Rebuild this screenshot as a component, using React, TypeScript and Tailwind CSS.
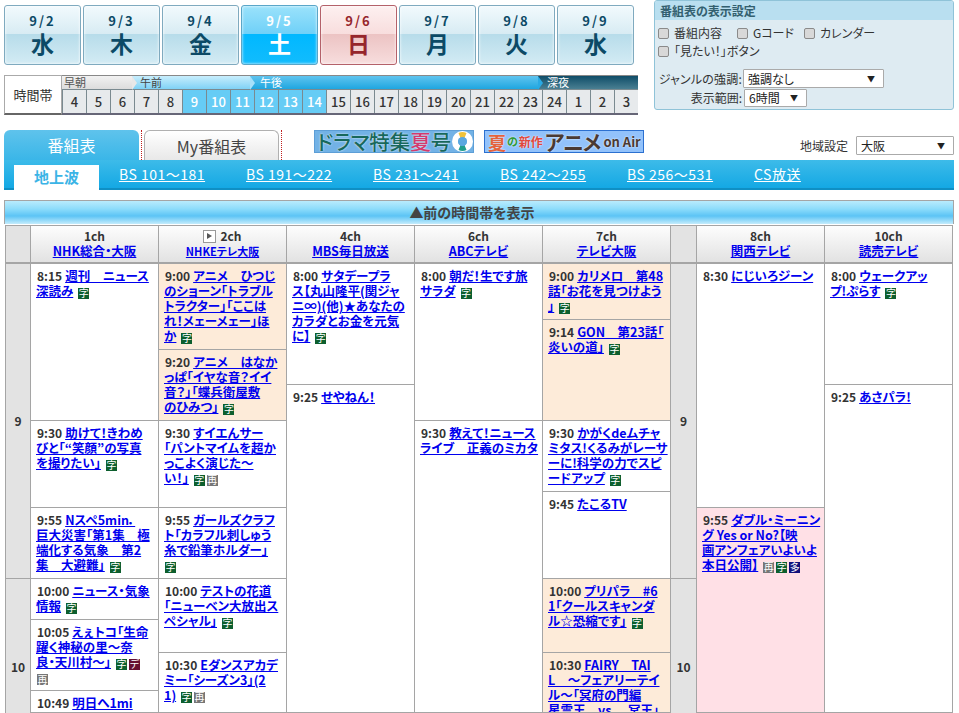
import React from 'react';

type Prog = { h?: number; t: string; lines: string[]; bg?: string };

const days = [
  { d: '9/2', w: '水' },
  { d: '9/3', w: '木' },
  { d: '9/4', w: '金' },
  { d: '9/5', w: '土', kind: 'on' },
  { d: '9/6', w: '日', kind: 'sun' },
  { d: '9/7', w: '月' },
  { d: '9/8', w: '火' },
  { d: '9/9', w: '水' },
];

const hours = [4, 5, 6, 7, 8, 9, 10, 11, 12, 13, 14, 15, 16, 17, 18, 19, 20, 21, 22, 23, 24, 1, 2, 3];

const navLinks = ['BS 101～181', 'BS 191～222', 'BS 231～241', 'BS 242～255', 'BS 256～531', 'CS放送'];

const OR = 'bg-[#fdebd9]';
const PK = 'bg-[#ffe0e6]';

const col1: Prog[] = [
  { h: 157, t: '8:15', lines: ['週刊　ニュース', '深読み {字}'] },
  { h: 87, t: '9:30', lines: ['助けて！きわめ', 'びと「“笑顔”の写真', 'を撮りたい」 {字}'] },
  { h: 71, t: '9:55', lines: ['Nスペ5min．', '巨大災害「第1集　極', '端化する気象　第2', '集　大避難」 {字}'] },
  { h: 41, t: '10:00', lines: ['ニュース・気象', '情報 {字}'] },
  { h: 71, t: '10:05', lines: ['えぇトコ「生命', '躍く神秘の里～奈', '良・天川村～」 {字}{デ}', '{再}'] },
  { t: '10:49', lines: ['明日へ1mi', 'n「つなげよう」'] },
];
const col2: Prog[] = [
  { h: 86, bg: OR, t: '9:00', lines: ['アニメ　ひつじ', 'のショーン「トラブル', 'トラクター」「ここは', 'れ！メェーメェー」ほ', 'か {字}'] },
  { h: 71, bg: OR, t: '9:20', lines: ['アニメ　はなか', 'っぱ「イヤな音？イイ', '音？」「蝶兵衛屋敷', 'のひみつ」 {字}'] },
  { h: 87, t: '9:30', lines: ['すイエんサー', '「パントマイムを超か', 'っこよく演じた～', 'い！」 {字}{再}'] },
  { h: 71, t: '9:55', lines: ['ガールズクラフ', 'ト「カラフル刺しゅう', '糸で鉛筆ホルダー」', '{字}'] },
  { h: 74, t: '10:00', lines: ['テストの花道', '「ニューベン大放出ス', 'ペシャル」 {字}'] },
  { t: '10:30', lines: ['Eダンスアカデ', 'ミー「シーズン3」(2', '1) {字}{再}'] },
];
const col4: Prog[] = [
  { h: 121, t: '8:00', lines: ['サタデープラ', 'ス【丸山隆平(関ジャ', 'ニ∞)(他)★あなたの', 'カラダとお金を元気', 'に】 {字}'] },
  { t: '9:25', lines: ['せやねん！'] },
];
const col6: Prog[] = [
  { h: 157, t: '8:00', lines: ['朝だ！生です旅', 'サラダ {字}'] },
  { t: '9:30', lines: ['教えて！ニュース', 'ライブ　正義のミカタ'] },
];
const col7: Prog[] = [
  { h: 56, bg: OR, t: '9:00', lines: ['カリメロ　第48', '話「お花を見つけよう', '」 {字}'] },
  { h: 101, bg: OR, t: '9:14', lines: ['GON　第23話「', '炎いの道」 {字}'] },
  { h: 71, t: '9:30', lines: ['かがくdeムチャ', 'ミタス!くるみがレーサ', 'ーに!科学の力でスピ', 'ードアップ {字}'] },
  { h: 87, t: '9:45', lines: ['たこるTV'] },
  { h: 74, bg: OR, t: '10:00', lines: ['プリパラ　#6', '1「クールスキャンダ', 'ル☆恐縮です」 {字}'] },
  { bg: OR, t: '10:30', lines: ['FAIRY　TAI', 'L　～フェアリーテイ', 'ル～「冥府の門編', '星霊王　vs.　冥王」'] },
];
const col8: Prog[] = [
  { h: 244, t: '8:30', lines: ['にじいろジーン'] },
  { bg: PK, t: '9:55', lines: ['ダブル・ミーニン', 'グ Yes or No?【映', '画アンフェアいよいよ', '本日公開】 {再}{字}{多}'] },
];
const col10: Prog[] = [
  { h: 121, t: '8:00', lines: ['ウェークアッ', 'プ!ぷらす {字}'] },
  { t: '9:25', lines: ['あさパラ!'] },
];

function Tag({ c, gap }: { c: string; gap: string }) {
  const color = c === '字' ? 'bg-[#0d5f2e]' : c === '再' ? 'bg-[#777777]' : c === 'デ' ? 'bg-[#661030]' : 'bg-[#10107a]';
  return (
    <span className={`inline-flex items-center justify-center w-[11px] h-[11px] align-[-1px] text-[10px] leading-none font-normal text-white ${gap} ${color}`}>
      {c}
    </span>
  );
}

function Line({ text }: { text: string }) {
  const parts = text.split(/(\{.\})/).filter(Boolean);
  return (
    <>
      {parts.map((p, i) => {
        if (!p.startsWith('{')) {
          return (
            <a key={i} href="#" className="text-[#0000ee] underline">
              {p.trimEnd()}
            </a>
          );
        }
        const gap = i === 0 ? 'ml-[1px]' : parts[i - 1].startsWith('{') ? 'ml-[2px]' : 'ml-[5px]';
        return <Tag key={i} c={p[1]} gap={gap} />;
      })}
    </>
  );
}

function Cell({ p }: { p: Prog }) {
  return (
    <div
      className={`border-b border-[#a5a5a5] pl-[5px] pt-[4px] overflow-hidden text-[12.5px] leading-[15px] font-bold whitespace-nowrap ${p.bg ?? 'bg-white'} ${p.h ? 'shrink-0' : 'grow'}`}
      style={p.h ? { height: p.h } : undefined}
    >
      {p.lines.map((l, i) => (
        <div key={i}>
          {i === 0 && <span className="text-[#333] text-[12px] ml-[1px] mr-[3px]">{p.t}</span>}
          <Line text={l} />
        </div>
      ))}
    </div>
  );
}

function Column({ items }: { items: Prog[] }) {
  return (
    <div className="w-[128px] shrink-0 flex flex-col border-r border-[#a5a5a5]">
      {items.map((p, i) => (
        <Cell key={i} p={p} />
      ))}
    </div>
  );
}

function HourColumn({ w }: { w: string }) {
  return (
    <div className={`${w} shrink-0 flex flex-col bg-[#e3e3e3] border-r border-[#a5a5a5] text-[#333] text-[12px] font-bold`}>
      <div className="h-[315px] shrink-0 border-b border-[#a5a5a5] flex items-center justify-center">9</div>
      <div className="h-[176px] shrink-0 flex items-center justify-center">10</div>
    </div>
  );
}

function ChannelHead({ ch, name, small, play }: { ch: string; name: string; small?: boolean; play?: boolean }) {
  return (
    <div className="w-[128px] shrink-0 border-r border-[#a5a5a5] flex flex-col items-center pt-[3px] text-[12px] leading-[14px] font-bold text-[#333]">
      <div className="flex items-center h-[14px]">
        {play && (
          <span className="w-[13px] h-[13px] mr-[4px] border border-[#999] bg-white flex items-center justify-center">
            <span className="border-l-[5px] border-l-[#555] border-y-[3px] border-y-transparent" />
          </span>
        )}
        {ch}
      </div>
      <a href="#" className={`text-[#0000ee] underline mt-[1px] ${small ? 'text-[11px]' : 'text-[12.5px]'}`}>
        {name}
      </a>
    </div>
  );
}

function Checkbox() {
  return (
    <input
      type="checkbox"
      readOnly
      className="appearance-none w-[11px] h-[11px] mr-[5px] rounded-[2px] border border-[#8a8a8a] bg-[#d8d8d8]"
    />
  );
}

function FakeSelect({ text, className }: { text: string; className: string }) {
  return (
    <div className={`flex items-center justify-between bg-white border border-[#aaa] rounded-[1px] pl-[4px] pr-[8px] text-[12px] text-[#222] ${className}`}>
      <span>{text}</span>
      <span className="text-[8px] text-[#222]">▼</span>
    </div>
  );
}

function Seam({ color }: { color: string }) {
  return (
    <svg width="6" height="14" viewBox="0 0 6 14" className="absolute left-0 top-0">
      <path d="M0 0 L5 7 L0 14 Z" fill={color} />
    </svg>
  );
}

function TimeBar() {
  return (
    <div className="flex mt-[10px] h-[40px] w-[634px] text-[12px]">
      <div className="w-[58px] shrink-0 bg-white border border-[#aaa] border-b-2 border-b-[#666] flex items-center justify-center text-[13px] text-[#333]">
        時間帯
      </div>
      <div className="w-[576px] shrink-0 flex flex-col border-b-2 border-[#667] border-t border-t-[#888]">
        <div className="flex h-[13px] text-[11px] leading-[13px]">
          <div className="w-[70px] pl-[2px] text-[#555] bg-[linear-gradient(#f2f2f2,#dcdcdc)]">早朝</div>
          <div className="relative w-[118px] pl-[8px] text-[#444] bg-[linear-gradient(#c8eefd,#7fd2f6)]">
            <Seam color="#e8e8e8" />
            午前
          </div>
          <div className="relative w-[288px] pl-[10px] text-white bg-[linear-gradient(#5fc4ef,#1fa6e0)]">
            <Seam color="#a6e0fa" />
            午後
          </div>
          <div className="relative w-[100px] pl-[9px] text-white bg-[linear-gradient(#0f4d68,#4a7f92)]">
            <Seam color="#2aaae4" />
            深夜
          </div>
        </div>
        <div className="flex grow border-t border-[#7a8a90]">
          {hours.map((h, i) => {
            const on = i >= 5 && i <= 10;
            return (
              <div
                key={i}
                className={`w-[24px] shrink-0 border-l border-[#7a8a90] flex items-center justify-center text-[13px] font-medium ${
                  on ? 'bg-[#66ccf5] text-white' : 'bg-[#e7eaec] text-[#333]'
                }`}
              >
                {h}
              </div>
            );
          })}
        </div>
      </div>
    </div>
  );
}

function Settings() {
  return (
    <div className="w-[300px] h-[110px] bg-[#deebf2] border border-[#8fc3d8] rounded-[3px] text-[12px] leading-[16px] text-[#333] overflow-hidden">
      <div className="h-[19px] bg-[#b9dff0] pl-[5px] font-bold text-[#33606f] flex items-center">番組表の表示設定</div>
      <div className="flex items-center h-[18px] mt-[4px] pl-[3px]">
        <Checkbox />
        <span className="w-[63px]">番組内容</span>
        <Checkbox />
        <span className="w-[51px]">Gコード</span>
        <Checkbox />
        <span>カレンダー</span>
      </div>
      <div className="flex items-center h-[18px] pl-[3px]">
        <Checkbox />
        <span>「見たい！」ボタン</span>
      </div>
      <div className="flex items-center h-[19px] mt-[9px]">
        <span className="w-[87px] text-right tracking-[0.2px]">ジャンルの強調:</span>
        <FakeSelect text="強調なし" className="ml-[1px] w-[141px] h-[19px]" />
      </div>
      <div className="flex items-center h-[19px]">
        <span className="w-[87px] text-right">表示範囲:</span>
        <FakeSelect text="6時間" className="ml-[2px] w-[63px] h-[18px]" />
      </div>
    </div>
  );
}

function DramaBanner() {
  return (
    <div className="w-[160px] h-[23px] shrink-0 border border-[#5d9ed6] bg-[#72b2e6] flex items-center pl-[2px] overflow-hidden text-[20.5px] leading-none font-medium text-[#17685c] [text-shadow:0_0_2px_#ffffff]">
      <span className="whitespace-nowrap">ドラマ特集<span className="text-[#d33a6e]">夏</span>号</span>
      <svg width="21" height="21" viewBox="0 0 21 21" className="ml-auto shrink-0">
        <circle cx="10.5" cy="10.5" r="7.5" fill="none" stroke="#ffffff" strokeWidth="6" />
        <path d="M6.5 2 A9.5 9.5 0 0 1 14.5 2 L12.5 7 A4 4 0 0 0 8.5 7 Z" fill="#f0c23a" />
        <path d="M6.5 19 A9.5 9.5 0 0 0 14.5 19 L12.5 14 A4 4 0 0 1 8.5 14 Z" fill="#1f9e8c" />
        <circle cx="10.5" cy="10.5" r="4.5" fill="#5aa8e0" />
      </svg>
    </div>
  );
}

function AnimeBanner() {
  return (
    <div className="w-[160px] h-[23px] shrink-0 border border-[#2c70d0] bg-[#92c2fb] flex items-center pl-[3px] overflow-hidden font-bold whitespace-nowrap [text-shadow:0_0_2px_#ffffff]">
      <span className="text-[18px] leading-none text-[#e4623c]">夏</span>
      <span className="text-[11px] leading-none text-[#2f9a3a] ml-[1px]">の</span>
      <span className="text-[12px] leading-none text-[#e2483c] ml-[1px]">新作</span>
      <span className="text-[21px] leading-none text-[#4a3a33] ml-[2px] tracking-[-1px]">アニメ</span>
      <span className="text-[13px] leading-none text-[#4a3a33] ml-[3px]">on Air</span>
    </div>
  );
}

export default function App() {
  return (
    <div className="h-[713px] w-[959px] overflow-hidden bg-white font-['Noto_Sans_CJK_JP','Liberation_Sans',sans-serif] [font-feature-settings:'palt']">
      {/* top: date buttons, time bar, settings */}
      <div className="flex h-[130px] pl-[4px]">
        <div className="w-[650px] shrink-0 pt-[5px]">
          <div className="flex gap-[2px]">
            {days.map((x) => (
              <div
                key={x.d}
                className={`w-[77px] h-[60px] shrink-0 rounded-[3px] border flex flex-col items-center font-bold shadow-[inset_0_0_3px_#ffffff] ${
                  x.kind === 'on'
                    ? 'border-[#5aa6c8] text-white bg-[linear-gradient(#9be2fb,#6ed0f8_49%,#00b8ff_49%,#12bcfd)]'
                    : x.kind === 'sun'
                    ? 'border-[#b4616a] text-[#96262c] bg-[linear-gradient(#fdf0f0,#f8dddd_49%,#ecc3c3_49%,#f7dddd)]'
                    : 'border-[#7faabf] text-[#0c4a66] bg-[linear-gradient(#f2fafd,#d7ebf3_49%,#b7dcea_49%,#d3ebf4)]'
                }`}
              >
                <span className="text-[13px] leading-[14px] mt-[8px] tracking-[2px]">{x.d}</span>
                <span className="text-[23px] leading-[26px] mt-[2px]">{x.w}</span>
              </div>
            ))}
          </div>
          <TimeBar />
        </div>
        <Settings />
      </div>

      {/* tabs + banners */}
      <div className="flex h-[30px] pl-[4px]">
        <div className="w-[135px] shrink-0 rounded-t-[6px] bg-[linear-gradient(#5fc3ec,#3ab6e8)] flex items-center justify-center text-[16px] text-white">
          番組表
        </div>
        <div className="ml-[2px] w-0 border-l border-dotted border-[#c02020] h-[30px]" />
        <div className="ml-[2px] w-[135px] shrink-0 rounded-t-[6px] border border-b-0 border-[#b0b0b0] bg-[linear-gradient(#ffffff,#e8e8e8)] flex items-center justify-center text-[16px] text-[#444]">
          My番組表
        </div>
        <div className="ml-[2px] w-0 border-l border-dotted border-[#c02020] h-[30px]" />
        <div className="ml-[32px]">
          <DramaBanner />
        </div>
        <div className="ml-[10px]">
          <AnimeBanner />
        </div>
        <div className="ml-[156px] flex items-center h-[23px] mt-[4px] text-[12px] text-[#333]">
          <span>地域設定</span>
          <FakeSelect text="大阪" className="ml-[8px] w-[98px] h-[19px]" />
        </div>
      </div>

      {/* broadcast wave nav */}
      <div className="ml-[4px] w-[950px] h-[30px] pl-[10px] flex items-end bg-[linear-gradient(#3dbbe9,#14a8e4)] border-b-2 border-[#0f8fc4] text-[14px] text-white">
        <div className="w-[85px] h-[25px] mb-[-2px] bg-white text-[#3bb4e6] text-[15px] font-bold flex items-center justify-center">地上波</div>
        <div className="flex ml-[20px] h-[28px] items-center">
          {navLinks.map((n) => (
            <a key={n} href="#" className="w-[127px] shrink-0">
              <span className="underline tracking-[0.5px]">{n}</span>
            </a>
          ))}
        </div>
      </div>

      <div className="ml-[4px] mt-[10px] w-[950px] h-[24px] pr-[14px] border border-b-0 border-[#a5a5a5] bg-[linear-gradient(#b9ebfd,#8cdcfb_35%,#5cc4f5_65%,#c4ecfc)] flex items-center justify-center text-[14px] font-bold text-[#444]">
        ▲前の時間帯を表示
      </div>

      {/* channel header */}
      <div className="flex ml-[5px] mt-[1px] h-[39px] border-l border-t border-b-2 border-[#a5a5a5] w-[948px] bg-[linear-gradient(#fdfdfd,#e2e2e2)]">
        <div className="w-[25px] shrink-0 bg-[#e3e3e3] border-r border-[#a5a5a5]" />
        <ChannelHead ch="1ch" name="NHK総合・大阪" />
        <ChannelHead ch="2ch" name="NHKEテレ大阪" small play />
        <ChannelHead ch="4ch" name="MBS毎日放送" />
        <ChannelHead ch="6ch" name="ABCテレビ" />
        <ChannelHead ch="7ch" name="テレビ大阪" />
        <div className="w-[26px] shrink-0 bg-[#e3e3e3] border-r border-[#a5a5a5]" />
        <ChannelHead ch="8ch" name="関西テレビ" />
        <ChannelHead ch="10ch" name="読売テレビ" />
      </div>

      {/* program grid */}
      <div className="flex ml-[5px] h-[449px] border-l border-[#a5a5a5] w-[948px]">
        <HourColumn w="w-[25px]" />
        <Column items={col1} />
        <Column items={col2} />
        <Column items={col4} />
        <Column items={col6} />
        <Column items={col7} />
        <HourColumn w="w-[26px]" />
        <Column items={col8} />
        <Column items={col10} />
      </div>
    </div>
  );
}
